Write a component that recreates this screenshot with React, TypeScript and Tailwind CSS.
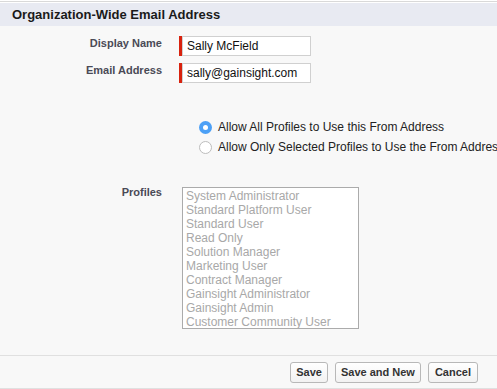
import React, { useState } from 'react';

const profiles = [
  'System Administrator',
  'Standard Platform User',
  'Standard User',
  'Read Only',
  'Solution Manager',
  'Marketing User',
  'Contract Manager',
  'Gainsight Administrator',
  'Gainsight Admin',
  'Customer Community User',
];

function Radio({ checked, label, onClick }: { checked: boolean; label: string; onClick: () => void }) {
  return (
    <button type="button" onClick={onClick} className="flex h-5 items-center whitespace-nowrap text-left">
      {checked ? (
        <span className="flex h-[13px] w-[13px] shrink-0 items-center justify-center rounded-full bg-[#4ca0f6]">
          <span className="h-[5px] w-[5px] rounded-full bg-white" />
        </span>
      ) : (
        <span className="h-[13px] w-[13px] shrink-0 rounded-full border border-[#bdbdbd] bg-white" />
      )}
      <span className="ml-[6px] text-[12px] text-[#222]">{label}</span>
    </button>
  );
}

function RequiredInput({ value }: { value: string }) {
  return (
    <div className="flex h-5">
      <div className="w-[3px] bg-[#d8220e]" />
      <input
        defaultValue={value}
        className="h-5 w-[129px] border border-[#d0d0d0] bg-white px-[4px] text-[12px] text-[#111] outline-none"
      />
    </div>
  );
}

export default function App() {
  const [allProfiles, setAllProfiles] = useState(true);

  return (
    <div className="h-[389px] w-[497px] overflow-hidden bg-[#f8f8f8] font-['Liberation_Sans',Arial,sans-serif]">
      {/* Top rule */}
      <div className="h-px bg-white" />
      <div className="h-px bg-[#d9d9d9]" />
      <div className="h-px bg-white" />

      {/* Header */}
      <div className="flex h-[23px] items-center bg-[#e8eaf2] px-3">
        <h2 className="text-[13px] font-bold text-[#1a1a1a]">Organization-Wide Email Address</h2>
      </div>

      {/* Fields */}
      <div className="grid grid-cols-[162px_1fr] gap-x-[17px] gap-y-[7px] pt-[10px]">
        <label className="pt-px text-right text-[11px] leading-[12px] font-bold text-[#4a4a56]">Display Name</label>
        <RequiredInput value="Sally McField" />
        <label className="pt-px text-right text-[11px] leading-[12px] font-bold text-[#4a4a56]">Email Address</label>
        <RequiredInput value="sally@gainsight.com" />
      </div>

      {/* Radios */}
      <div className="flex flex-col pl-[199px] pt-[34px]">
        <Radio checked={allProfiles} label="Allow All Profiles to Use this From Address" onClick={() => setAllProfiles(true)} />
        <Radio checked={!allProfiles} label="Allow Only Selected Profiles to Use the From Address" onClick={() => setAllProfiles(false)} />
      </div>

      {/* Profiles */}
      <div className="grid grid-cols-[162px_1fr] gap-x-[20px] pt-[30px]">
        <label className="text-right text-[11px] leading-[11px] font-bold text-[#4a4a56]">Profiles</label>
        <div className="h-[142px] w-[177px] overflow-hidden border border-[#ababab] bg-white pl-[3px] pt-px">
          {profiles.map((p) => (
            <div key={p} className="whitespace-nowrap text-[12px] leading-[14px] text-[#a8a8a8]">
              {p}
            </div>
          ))}
        </div>
      </div>

      {/* Footer */}
      <div className="mt-[26px] flex h-[34px] items-center justify-end gap-[7px] border-y border-[#e0e0e0] pr-[19px]">
        <button className="h-[21px] rounded-[3px] border border-[#b8b8b8] bg-gradient-to-b from-white to-[#f2f2f2] px-[5px] text-[11px] font-bold text-[#333]">
          Save
        </button>
        <button className="h-[21px] rounded-[3px] border border-[#b8b8b8] bg-gradient-to-b from-white to-[#f2f2f2] px-[5px] text-[11px] font-bold text-[#333]">
          Save and New
        </button>
        <button className="h-[21px] rounded-[3px] border border-[#b8b8b8] bg-gradient-to-b from-white to-[#f2f2f2] px-[6px] text-[11px] font-bold text-[#333]">
          Cancel
        </button>
      </div>
    </div>
  );
}
